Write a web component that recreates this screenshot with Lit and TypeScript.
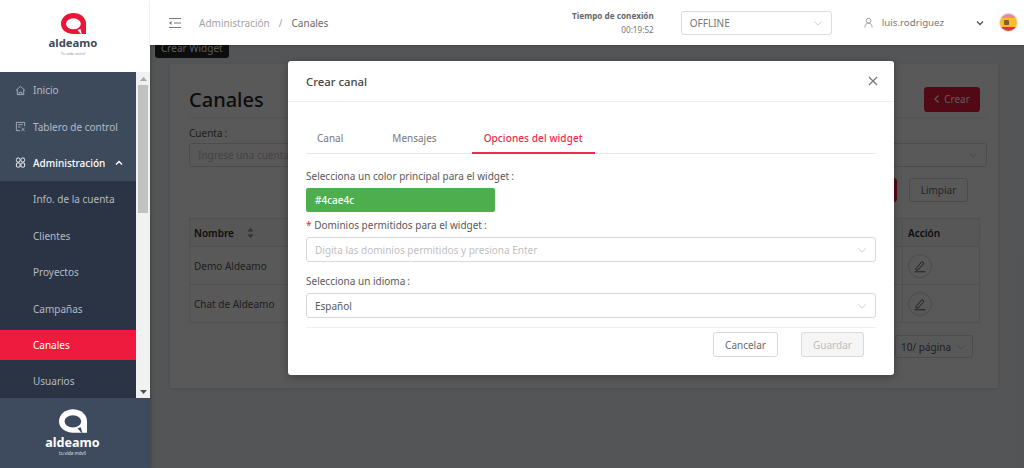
import { LitElement, html, css, svg } from "lit";
import { customElement } from "lit/decorators.js";

const logoA = (fill: string, hole: string) => svg`
  <path fill=${fill} d="M12.500 0C5.600 0 0 4.700 0 10.800S5.600 21 12.500 21H25V10.800C25 4.700 19.400 0 12.500 0Z"/>
  <ellipse fill=${hole} cx="12.400" cy="10.800" rx="7.400" ry="5.500"/>
  <path fill=${hole} d="M20 21l-3.500-4 3-1 1.300 5Z"/>`;

const chevron = html`<svg class="chev" viewBox="0 0 12 12"><path d="M1.500 4l4.500 4.500L10.500 4" fill="none" stroke="currentColor" stroke-width="1"/></svg>`;
const pencil = html`<svg class="pencil" viewBox="0 0 14 14"><path d="M3 9.500L9 2.500l2 1.700L5 11H3.200Z M1.500 12.800h11" fill="none" stroke="currentColor" stroke-width="1"/></svg>`;
const colon = html`<span class="colon">:</span>`;

const subItems = ["Info. de la cuenta", "Clientes", "Proyectos", "Campañas", "Canales", "Usuarios"];

@customElement("app-root")
export class AppRoot extends LitElement {
  static styles = css`
    :host { display: block; width: 1024px; height: 468px; overflow: hidden; font-family: "Noto Sans", "Open Sans", sans-serif; font-size: 10px; color: #595959; background: #f0f2f5; }
    .app { display: flex; height: 468px; }
    .colon { margin-left: 2px; }
    .side { width: 150px; flex: none; display: flex; flex-direction: column; position: relative; z-index: 3; box-shadow: 1px 0 4px rgba(0,0,0,.25); background: #fff; }
    .brand { height: 72px; flex: none; display: flex; flex-direction: column; align-items: center; padding: 13px 4px 0 0; box-sizing: border-box; }
    .brand svg { width: 25px; height: 21px; display: block; }
    .word { font-size: 11.300px; font-weight: 700; line-height: 14px; color: #3d4a5c; margin-top: 2px; white-space: nowrap; }
    .tag { font-size: 4px; line-height: 5px; color: #8a93a0; margin-top: 1px; white-space: nowrap; }
    .mid { flex: 1; min-height: 0; display: flex; }
    .menu { width: 136px; flex: none; overflow: hidden; background: #2b3444; }
    .menu ul { list-style: none; margin: 0; display: flex; flex-direction: column; gap: 6.400px; padding: 3.200px 0; }
    .top { background: #3d4a5c; }
    .menu li { height: 30px; display: flex; align-items: center; color: #b4bac3; white-space: nowrap; }
    .top li { padding-left: 15px; gap: 7px; }
    .top li svg { width: 11px; height: 11px; flex: none; }
    .top li.open { color: #fff; font-weight: 500; }
    .top li svg.caret { width: 8px; height: 8px; margin-left: 3px; }
    .sub li { padding-left: 33px; }
    .sub li.active { background: #ee1b3e; color: #fff; }
    .bar { width: 14px; flex: none; background: #f1f1f1; display: flex; flex-direction: column; align-items: center; }
    .arrow { height: 13px; flex: none; display: flex; align-items: center; justify-content: center; }
    .arrow svg { width: 7px; height: 4px; }
    .thumb { width: 10px; height: 128px; background: #c1c1c1; flex: none; }
    .track { flex: 1; }
    .foot { height: 70px; flex: none; background: #3e4a5d; display: flex; flex-direction: column; align-items: center; padding: 11px 5px 0 0; box-sizing: border-box; color: #fff; }
    .foot svg { width: 28px; height: 24px; display: block; }
    .foot .word { color: #fff; font-size: 12.600px; line-height: 15px; margin-top: 2px; }
    .foot .tag { color: #dde0e5; font-size: 4.500px; line-height: 6px; margin-top: 0; }
    .main { flex: 1; min-width: 0; display: flex; flex-direction: column; position: relative; }
    .head { height: 45px; flex: none; background: #fff; display: flex; align-items: center; position: relative; z-index: 3; box-shadow: 0 1px 2px rgba(0,0,0,.2); }
    .burger { width: 13px; height: 12px; margin-left: 18px; flex: none; }
    .crumb { margin-left: 18px; display: flex; gap: 9px; color: #a3a3a3; }
    .crumb b { font-weight: 400; color: #696969; }
    .time { margin-left: auto; text-align: right; font-size: 8.200px; line-height: 14px; color: #777; }
    .time b { display: block; font-weight: 700; color: #666; }
    .status { width: 151px; height: 24px; box-sizing: border-box; margin-left: 27px; border: 1px solid #dcdcdc; border-radius: 3px; display: flex; align-items: center; justify-content: space-between; padding: 0 8px; color: #777; }
    .chev { width: 10px; height: 10px; color: #c8c8c8; flex: none; }
    .user { width: 9px; height: 11px; margin-left: 32px; flex: none; }
    .uname { margin-left: 9px; color: #777; font-size: 9.700px; }
    .dd { width: 8px; height: 8px; margin-left: 32px; flex: none; }
    .flag { width: 17px; height: 17px; border-radius: 50%; margin: 0 7px 0 16px; flex: none; box-shadow: 0 0 2px rgba(0,0,0,.4); background: linear-gradient(#e88a8f 0 25%, #f4c020 25% 75%, #d9363e 75%); display: flex; align-items: center; padding-left: 4px; box-sizing: border-box; }
    .flag i { width: 5px; height: 5px; background: #8a5a2b; border-radius: 1px; }
    .body { flex: 1; position: relative; padding: 19px 26px 0 20px; min-height: 0; }
    .tip { position: absolute; left: 5px; top: -7px; background: #262626; color: #fff; padding: 3px 6px; border-radius: 3px; line-height: 14px; }
    .card { height: 324px; box-sizing: border-box; background: #fff; padding: 20px 11px 0 19px; box-shadow: 0 1px 3px rgba(0,0,0,.1); }
    .ctitle { display: flex; justify-content: space-between; align-items: center; height: 30px; padding-right: 7px; padding-bottom: 3px; border-bottom: 1px solid #eee; font-size: 20px; font-weight: 500; color: #262626; }
    .crear { width: 56px; height: 25px; box-sizing: border-box; background: #ee1b3e; color: #fff; border-radius: 3px; display: flex; align-items: center; justify-content: center; gap: 5px; font-size: 10px; font-weight: 400; }
    .crear svg { width: 5px; height: 8px; }
    .lbl { margin-top: 7px; line-height: 16px; color: #595959; }
    .inputs { display: flex; justify-content: space-between; margin-top: 2px; }
    .inp { height: 24px; box-sizing: border-box; border: 1px solid #d9d9d9; border-radius: 3px; display: flex; align-items: center; justify-content: space-between; padding: 0 8px; color: #bfbfbf; }
    .inp.a { width: 400px; }
    .inp.b { width: 400px; }
    .actions { display: flex; justify-content: flex-end; gap: 12px; margin: 11px 19px 0 0; }
    .btn { height: 24px; box-sizing: border-box; border-radius: 3px; border: 1px solid #d9d9d9; display: flex; align-items: center; justify-content: center; background: #fff; color: #696969; }
    .btn.red { width: 60px; background: #ee1b3e; border-color: #ee1b3e; }
    .btn.clr { width: 59px; }
    .tbl { margin: 16px 7px 0 0; border: 1px solid #e8e8e8; display: grid; grid-template-columns: 1fr 77px; grid-template-rows: 28px 38px 37px; }
    .tbl > div { display: flex; align-items: center; padding: 0 4px; border-bottom: 1px solid #e8e8e8; color: #595959; }
    .tbl > div:nth-last-child(-n+2) { border-bottom: 0; }
    .tbl > div.hd { background: #fafafa; font-weight: 600; color: #262626; gap: 13px; }
    .tbl > div.act { border-left: 1px solid #e8e8e8; padding-left: 5px; }
    .sort { width: 7px; height: 10px; }
    .round { width: 24px; height: 24px; box-sizing: border-box; border: 1px solid #d9d9d9; border-radius: 50%; display: flex; align-items: center; justify-content: center; }
    .pencil { width: 14px; height: 14px; color: #595959; }
    .pager { display: flex; justify-content: flex-end; margin: 12px 14px 0 0; }
    .pg { width: 78px; height: 23px; box-sizing: border-box; border: 1px solid #d9d9d9; border-radius: 3px; display: flex; align-items: center; justify-content: space-between; padding: 0 6px 0 5px; color: #595959; white-space: nowrap; }
    .mask { position: absolute; left: 0; right: 0; top: 0; bottom: 0; z-index: 1; background: rgba(0,0,0,.65); }
    .modal { position: absolute; z-index: 2; left: 138px; top: 61px; width: 606px; height: 314px; box-sizing: border-box; background: #fff; border-radius: 3px; box-shadow: 0 2px 8px rgba(0,0,0,.3); display: flex; flex-direction: column; }
    .mh { height: 41px; flex: none; box-sizing: border-box; border-bottom: 1px solid #efefef; display: flex; align-items: center; justify-content: space-between; padding: 0 16px 0 18px; font-size: 11.300px; font-weight: 500; color: #444; }
    .mh svg { width: 10px; height: 10px; }
    .mb { padding: 0 18px; flex: 1; display: flex; flex-direction: column; }
    .tabs { display: flex; margin-top: 21px; height: 31px; box-sizing: border-box; border-bottom: 1px solid #e8e8e8; color: #777; }
    .tabs span { display: flex; align-items: center; padding: 0 11px; margin-right: 27px; height: 30px; box-sizing: border-box; }
    .tabs span.on { color: #ee2a4e; font-weight: 500; letter-spacing: .1px; border-bottom: 2px solid #ee2a4e; height: 31px; padding: 0 12px; margin: 0 0 0 -3px; }
    .fl { line-height: 16px; margin-top: 14px; color: #595959; }
    .fl.s { margin-top: 5px; }
    .fl.t { margin-top: 12px; line-height: 15px; }
    .fl em { color: #ee1b3e; font-style: normal; }
    .color { width: 189px; height: 24px; margin-top: 4px; box-sizing: border-box; background: #4cae4c; border-radius: 2px; color: #fff; display: flex; align-items: center; padding-left: 9px; font-weight: 500; }
    .fld { height: 25px; margin-top: 4px; box-sizing: border-box; border: 1px solid #d9d9d9; border-radius: 3px; display: flex; align-items: center; justify-content: space-between; padding: 0 8px; color: #bfbfbf; }
    .fld.val { color: #595959; }
    .mf { margin-top: 9px; border-top: 1px solid #efefef; display: flex; justify-content: flex-end; padding: 4px 12px 0 0; gap: 23px; }
    .mf .btn { width: 65px; height: 25px; }
    .mf .off { width: 63px; background: #f5f5f5; color: #bdbdbd; }
  `;

  render() {
    return html`<div class="app">
      <aside class="side">
        <div class="brand">
          <svg viewBox="0 0 25 21">${logoA("#e8173a", "#fff")}</svg>
          <div class="word">aldeamo</div>
          <div class="tag">Tu vida móvil</div>
        </div>
        <div class="mid">
          <nav class="menu">
            <ul class="top">
              <li><svg viewBox="0 0 12 12"><path d="M1 6l5-4.500L11 6M2.500 5v5.500h7V5M4.500 10.500V8h3v2.500" fill="none" stroke="#b4bac3" stroke-width=".9"/></svg>Inicio</li>
              <li><svg viewBox="0 0 12 12"><path d="M1.500 1.500h9v4M1.500 1.500v9h4M3.500 4h5M3.500 6.500h2.500M7 7.500l3.500 3.500M10.500 7.500L7 11" fill="none" stroke="#b4bac3" stroke-width=".9"/></svg>Tablero de control</li>
              <li class="open"><svg viewBox="0 0 12 12"><g fill="none" stroke="#fff" stroke-width="1"><rect x="1.500" y="1" width="4" height="4.500" rx="1.800"/><rect x="6.500" y="1" width="4" height="4.500" rx="1.800"/><rect x="1.500" y="6.500" width="4" height="4.500" rx="1"/><rect x="6.500" y="6.500" width="4" height="4.500" rx="1"/></g></svg>Administración<svg class="caret" viewBox="0 0 8 8"><path d="M1 5.500L4 2.500l3 3" fill="none" stroke="#fff" stroke-width="1.400"/></svg></li>
            </ul>
            <ul class="sub">
              ${subItems.map((s) => html`<li class=${s === "Canales" ? "active" : ""}>${s}</li>`)}
            </ul>
          </nav>
          <div class="bar">
            <div class="arrow"><svg viewBox="0 0 7 4"><path d="M3.500 0L7 4H0Z" fill="#a8a8a8"/></svg></div>
            <div class="thumb"></div>
            <div class="track"></div>
            <div class="arrow"><svg viewBox="0 0 7 4"><path d="M0 0h7L3.500 4Z" fill="#505050"/></svg></div>
          </div>
        </div>
        <div class="foot">
          <svg viewBox="0 0 25 21">${logoA("#fff", "#3e4a5d")}</svg>
          <div class="word">aldeamo</div>
          <div class="tag">tu vida móvil</div>
        </div>
      </aside>
      <div class="main">
        <header class="head">
          <svg class="burger" viewBox="0 0 13 12"><path d="M1 1.500h12M6 6h7M1 10.500h12" stroke="#777" stroke-width="1.100" fill="none"/><path d="M3.500 4L1 6l2.500 2Z" fill="#777"/></svg>
          <div class="crumb"><span>Administración</span><span>/</span><b>Canales</b></div>
          <div class="time"><b>Tiempo de conexión</b>00:19:52</div>
          <div class="status">OFFLINE ${chevron}</div>
          <svg class="user" viewBox="0 0 10 11"><circle cx="5" cy="3.500" r="2.700" fill="none" stroke="#999"/><path d="M1 11c0-3 1.500-4.800 4-4.800S9 8 9 11" fill="none" stroke="#999"/></svg>
          <span class="uname">luis.rodriguez</span>
          <svg class="dd" viewBox="0 0 8 8"><path d="M1 2.500l3 3 3-3" fill="none" stroke="#555" stroke-width="1.300"/></svg>
          <div class="flag"><i></i></div>
        </header>
        <div class="body">
          <div class="tip">Crear Widget</div>
          <section class="card">
            <div class="ctitle">Canales
              <div class="crear"><svg viewBox="0 0 5 8"><path d="M4.500 .5L1 4l3.500 3.500" fill="none" stroke="#fff" stroke-width="1.200"/></svg>Crear</div>
            </div>
            <div class="lbl">Cuenta${colon}</div>
            <div class="inputs"><div class="inp a">Ingrese una cuenta</div><div class="inp b"><span></span>${chevron}</div></div>
            <div class="actions"><div class="btn red"></div><div class="btn clr">Limpiar</div></div>
            <div class="tbl">
              <div class="hd">Nombre <svg class="sort" viewBox="0 0 7 10"><path d="M3.500 0L6.500 3.500H.5ZM.5 6.500h6L3.500 10Z" fill="#8a8a8a"/></svg></div>
              <div class="hd act">Acción</div>
              <div>Demo Aldeamo</div><div class="act"><span class="round">${pencil}</span></div>
              <div>Chat de Aldeamo</div><div class="act"><span class="round">${pencil}</span></div>
            </div>
            <div class="pager"><div class="pg">10/ página ${chevron}</div></div>
          </section>
        </div>
        <div class="mask"></div>
        <div class="modal">
          <div class="mh">Crear canal <svg viewBox="0 0 10 10"><path d="M1 1l8 8M9 1L1 9" stroke="#777" stroke-width="1.200" fill="none"/></svg></div>
          <div class="mb">
            <div class="tabs"><span>Canal</span><span>Mensajes</span><span class="on">Opciones del widget</span></div>
            <div class="fl">Selecciona un color principal para el widget${colon}</div>
            <div class="color">#4cae4c</div>
            <div class="fl s"><em>* </em>Dominios permitidos para el widget${colon}</div>
            <div class="fld">Digita las dominios permitidos y presiona Enter ${chevron}</div>
            <div class="fl t">Selecciona un idioma${colon}</div>
            <div class="fld val">Español ${chevron}</div>
            <div class="mf"><div class="btn">Cancelar</div><div class="btn off">Guardar</div></div>
          </div>
        </div>
      </div>
    </div>`;
  }
}
